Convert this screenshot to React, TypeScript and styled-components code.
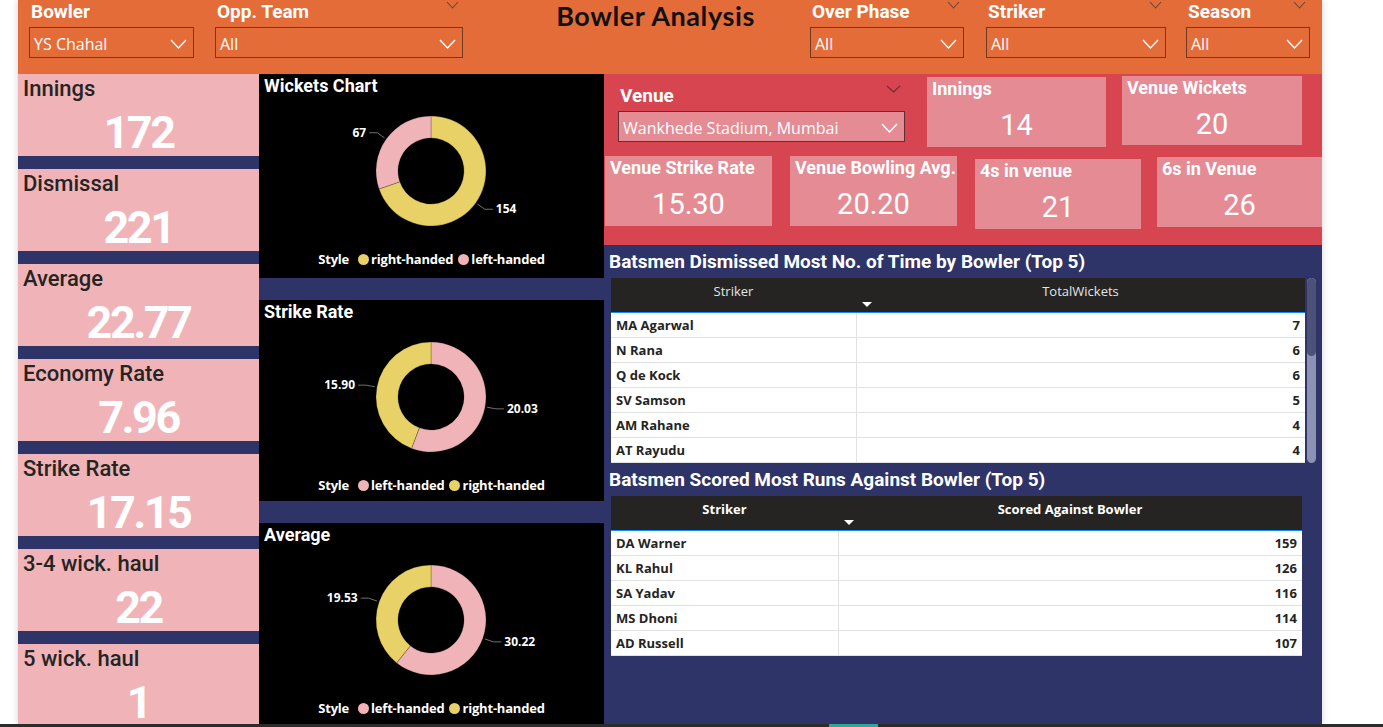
import React from 'react';
import styled, { createGlobalStyle } from 'styled-components';

const GlobalStyle = createGlobalStyle`
  html, body { margin: 0; padding: 0; background: #fff; }
  body { font-family: 'Open Sans', 'Liberation Sans', sans-serif; overflow: hidden; }
  * { box-sizing: border-box; }
`;

const NAVY = '#2E3467';
const PINK = '#F0B4B8';
const YELLOW = '#E8D166';

type Seg = { value: number; color: string; text: string };
type LegendItem = { label: string; color: string };

const polar = (cx: number, cy: number, r: number, deg: number) => {
	const a = (deg * Math.PI) / 180;
	return [cx + r * Math.sin(a), cy - r * Math.cos(a)];
};

const arc = (cx: number, cy: number, r0: number, r1: number, a0: number, a1: number) => {
	const large = a1 - a0 > 180 ? 1 : 0;
	const [x0, y0] = polar(cx, cy, r1, a0);
	const [x1, y1] = polar(cx, cy, r1, a1);
	const [x2, y2] = polar(cx, cy, r0, a1);
	const [x3, y3] = polar(cx, cy, r0, a0);
	return `M${x0} ${y0} A${r1} ${r1} 0 ${large} 1 ${x1} ${y1} L${x2} ${y2} A${r0} ${r0} 0 ${large} 0 ${x3} ${y3} Z`;
};

const Chevron = ({ w, h, color, sw }: { w: number; h: number; color: string; sw: number }) => (
	<svg width={w} height={h} viewBox={`0 0 ${w} ${h}`}>
		<polyline points={`1,1 ${w / 2},${h - 1} ${w - 1},1`} fill="none" stroke={color} strokeWidth={sw} />
	</svg>
);

const Donut = ({ segs }: { segs: Seg[] }) => {
	const cx = 172;
	const cy = 75;
	const rOut = 55;
	const rIn = 33;
	const total = segs.reduce((s, x) => s + x.value, 0);
	let start = 0;
	return (
		<DonutSvg width={345} height={146}>
			{segs.map(s => {
				const sweep = (s.value / total) * 360;
				const a0 = start;
				const a1 = start + sweep;
				start = a1;
				const mid = (a0 + a1) / 2;
				const [px, py] = polar(cx, cy, rOut + 2, mid);
				const [ex, ey] = polar(cx, cy, rOut + 11, mid);
				const dir = Math.sin((mid * Math.PI) / 180) >= 0 ? 1 : -1;
				const hx = ex + dir * 8;
				return (
					<g key={s.text}>
						<path d={arc(cx, cy, rIn, rOut, a0, a1)} fill={s.color} stroke='rgba(0,0,0,.35)' strokeWidth={0.6} />
						<polyline points={`${px},${py} ${ex},${ey} ${hx},${ey}`} fill='none' stroke='#6f6f6f' strokeWidth={1} />
						<ChartLabel x={hx + dir * 3} y={ey + 4} textAnchor={dir > 0 ? 'start' : 'end'}>
							{s.text}
						</ChartLabel>
					</g>
				);
			})}
		</DonutSvg>
	);
};

const Chart = ({ title, segs, legend, h }: { title: string; segs: Seg[]; legend: LegendItem[]; h?: number }) => (
	<ChartPanel $h={h}>
		<ChartTitle>{title}</ChartTitle>
		<Donut segs={segs} />
		<Legend>
			<LegendHead>Style</LegendHead>
			{legend.map(l => (
				<LegendEntry key={l.label}>
					<LegendDot $color={l.color} />
					{l.label}
				</LegendEntry>
			))}
		</Legend>
	</ChartPanel>
);

const HeaderSlicer = ({ label, value, w, ml, chevron }: { label: string; value: string; w: number; ml?: number; chevron?: boolean }) => (
	<Slicer $w={w} $ml={ml}>
		<SlicerHead>
			<SlicerLabel>{label}</SlicerLabel>
			{chevron && <Chevron w={13} h={8} color='rgba(70,55,50,.75)' sw={1.1} />}
		</SlicerHead>
		<DropBox>
			<span>{value}</span>
			<Chevron w={17} h={10} color='#fff' sw={1.4} />
		</DropBox>
	</Slicer>
);

const kpis = [
	{ label: 'Innings', value: '172' },
	{ label: 'Dismissal', value: '221' },
	{ label: 'Average', value: '22.77' },
	{ label: 'Economy Rate', value: '7.96' },
	{ label: 'Strike Rate', value: '17.15' },
	{ label: '3-4 wick. haul', value: '22' },
	{ label: '5 wick. haul', value: '1' },
];

const dismissed = [
	['MA Agarwal', '7'],
	['N Rana', '6'],
	['Q de Kock', '6'],
	['SV Samson', '5'],
	['AM Rahane', '4'],
	['AT Rayudu', '4'],
];

const scored = [
	['DA Warner', '159'],
	['KL Rahul', '126'],
	['SA Yadav', '116'],
	['MS Dhoni', '114'],
	['AD Russell', '107'],
];

const App = () => {
	return (
		<Page>
			<GlobalStyle />
			<Screen>
				<Report>
					<Header>
						<HeaderSlicer label='Bowler' value='YS Chahal' w={165} />
						<HeaderSlicer label='Opp. Team' value='All' w={248} ml={21} chevron />
						<TitleBox>
							<Title>Bowler Analysis</Title>
						</TitleBox>
						<HeaderSlicer label='Over Phase' value='All' w={154} chevron />
						<HeaderSlicer label='Striker' value='All' w={180} ml={22} chevron />
						<HeaderSlicer label='Season' value='All' w={124} ml={20} chevron />
					</Header>
					<Body>
						<KpiColumn>
							{kpis.map((k, i) => (
								<KpiCard key={k.label} $grow={i === kpis.length - 1}>
									<KpiLabel>{k.label}</KpiLabel>
									<KpiValue>{k.value}</KpiValue>
								</KpiCard>
							))}
						</KpiColumn>
						<ChartColumn>
							<Chart
								title='Wickets Chart'
								h={204}
								segs={[
									{ value: 154, color: YELLOW, text: '154' },
									{ value: 67, color: PINK, text: '67' },
								]}
								legend={[
									{ label: 'right-handed', color: YELLOW },
									{ label: 'left-handed', color: PINK },
								]}
							/>
							<Chart
								title='Strike Rate'
								h={201}
								segs={[
									{ value: 20.03, color: PINK, text: '20.03' },
									{ value: 15.9, color: YELLOW, text: '15.90' },
								]}
								legend={[
									{ label: 'left-handed', color: PINK },
									{ label: 'right-handed', color: YELLOW },
								]}
							/>
							<Chart
								title='Average'
								segs={[
									{ value: 30.22, color: PINK, text: '30.22' },
									{ value: 19.53, color: YELLOW, text: '19.53' },
								]}
								legend={[
									{ label: 'left-handed', color: PINK },
									{ label: 'right-handed', color: YELLOW },
								]}
							/>
						</ChartColumn>
						<RightColumn>
							<VenuePanel>
								<VenueRow $h={80} $pl={14}>
									<Slicer $w={287} $mt={8}>
										<SlicerHead>
											<SlicerLabel>Venue</SlicerLabel>
											<Chevron w={15} h={8} color='rgba(70,40,45,.75)' sw={1.1} />
										</SlicerHead>
										<DropBox $fill='#E48B94' $edge='#5E3036'>
											<span>Wankhede Stadium, Mumbai</span>
											<Chevron w={17} h={10} color='#fff' sw={1.4} />
										</DropBox>
									</Slicer>
									<VenueCard $w={179} $h={70} $ml={22} $mt={1}>
										<VenueLabel>Innings</VenueLabel>
										<VenueValue>14</VenueValue>
									</VenueCard>
									<VenueCard $w={180} $h={69} $ml={16}>
										<VenueLabel>Venue Wickets</VenueLabel>
										<VenueValue>20</VenueValue>
									</VenueCard>
								</VenueRow>
								<VenueRow $pl={1}>
									<VenueCard $w={167} $h={70}>
										<VenueLabel>Venue Strike Rate</VenueLabel>
										<VenueValue>15.30</VenueValue>
									</VenueCard>
									<VenueCard $w={167} $h={70} $ml={18}>
										<VenueLabel>Venue Bowling Avg.</VenueLabel>
										<VenueValue>20.20</VenueValue>
									</VenueCard>
									<VenueCard $w={166} $h={70} $ml={18} $mt={3}>
										<VenueLabel>4s in venue</VenueLabel>
										<VenueValue>21</VenueValue>
									</VenueCard>
									<VenueCard $w={165} $h={70} $ml={16} $mt={1}>
										<VenueLabel>6s in Venue</VenueLabel>
										<VenueValue>26</VenueValue>
									</VenueCard>
								</VenueRow>
							</VenuePanel>
							<TablesArea>
								<TableTitle>Batsmen Dismissed Most No. of Time by Bowler (Top 5)</TableTitle>
								<TableWrap>
									<Grid $w={694}>
										<colgroup>
											<col style={{ width: 245 }} />
											<col />
										</colgroup>
										<thead>
											<tr>
												<HeadCell>Striker</HeadCell>
												<HeadCell>
													TotalWickets
													<SortArrow />
												</HeadCell>
											</tr>
										</thead>
										<tbody>
											{dismissed.map(([n, v]) => (
												<tr key={n}>
													<NameCell>{n}</NameCell>
													<NumCell>{v}</NumCell>
												</tr>
											))}
										</tbody>
									</Grid>
									<ScrollTrack>
										<ScrollThumb />
									</ScrollTrack>
								</TableWrap>
								<TableTitle $mt={6}>Batsmen Scored Most Runs Against Bowler (Top 5)</TableTitle>
								<TableWrap>
									<Grid $w={691}>
										<colgroup>
											<col style={{ width: 227 }} />
											<col />
										</colgroup>
										<thead>
											<tr>
												<HeadCell $bold>Striker</HeadCell>
												<HeadCell $bold>
													Scored Against Bowler
													<SortArrow />
												</HeadCell>
											</tr>
										</thead>
										<tbody>
											{scored.map(([n, v]) => (
												<tr key={n}>
													<NameCell>{n}</NameCell>
													<NumCell>{v}</NumCell>
												</tr>
											))}
										</tbody>
									</Grid>
								</TableWrap>
							</TablesArea>
						</RightColumn>
					</Body>
				</Report>
			</Screen>
			<TaskStrip>
				<TaskMark />
			</TaskStrip>
		</Page>
	);
};

export default App;

const Page = styled.div`
	width: 1383px;
	height: 727px;
	display: flex;
	flex-direction: column;
	background: #fff;
	overflow: hidden;
`;

const Screen = styled.div`
	flex: 1;
	display: flex;
	padding-left: 18px;
	min-height: 0;
`;

const Report = styled.div`
	width: 1304px;
	display: flex;
	flex-direction: column;
	box-shadow: 0 0 7px rgba(0, 0, 0, 0.18);
	overflow: hidden;
`;

const TaskStrip = styled.div`
	height: 3px;
	flex: none;
	background: #2b2b2b;
	display: flex;
	padding-left: 829px;
`;

const TaskMark = styled.div`
	width: 49px;
	background: #2fa89a;
`;

const Header = styled.header`
	height: 74px;
	flex: none;
	background: #e46c39;
	display: flex;
	align-items: flex-start;
	padding-left: 11px;
`;

const Slicer = styled.div<{ $w: number; $ml?: number; $mt?: number }>`
	flex: none;
	width: ${p => p.$w}px;
	margin-left: ${p => p.$ml ?? 0}px;
	margin-top: ${p => p.$mt ?? 0}px;
`;

const SlicerHead = styled.div`
	height: 27px;
	display: flex;
	justify-content: space-between;
	align-items: flex-start;
	padding: 0 4px 0 2px;
	svg {
		margin-top: 1px;
	}
`;

const SlicerLabel = styled.span`
	font-family: Roboto, 'Liberation Sans', sans-serif;
	font-weight: 700;
	font-size: 19px;
	line-height: 23px;
	color: #fff;
`;

const DropBox = styled.div<{ $fill?: string; $edge?: string }>`
	height: 31px;
	border: 1.5px solid ${p => p.$edge ?? '#6e3a22'};
	background: ${p => p.$fill ?? 'transparent'};
	display: flex;
	align-items: center;
	justify-content: space-between;
	padding: 2px 6px 0 4px;
	font-family: 'Open Sans', 'Liberation Sans', sans-serif;
	font-size: 16px;
	color: #fff;
	white-space: nowrap;
`;

const TitleBox = styled.div`
	flex: none;
	width: 347px;
	padding-left: 38px;
	text-align: center;
`;

const Title = styled.h1`
	margin: 0;
	font-family: Lato, 'Liberation Sans', sans-serif;
	font-weight: 700;
	font-size: 27px;
	line-height: 32px;
	letter-spacing: 0.6px;
	color: #111;
`;

const Body = styled.div`
	flex: 1;
	display: flex;
	min-height: 0;
`;

const KpiColumn = styled.div`
	width: 241px;
	flex: none;
	display: flex;
	flex-direction: column;
	gap: 13px;
	background: ${NAVY};
`;

const KpiCard = styled.div<{ $grow?: boolean }>`
	height: 82px;
	flex: ${p => (p.$grow ? '1 1 0' : 'none')};
	min-height: 0;
	background: ${PINK};
	padding-top: 3px;
	display: flex;
	flex-direction: column;
`;

const KpiLabel = styled.div`
	padding-left: 5px;
	font-family: Roboto, 'Liberation Sans', sans-serif;
	font-weight: 500;
	font-size: 22px;
	line-height: 24px;
	color: #252423;
`;

const KpiValue = styled.div`
	margin-top: 9px;
	text-align: center;
	font-family: Roboto, 'Liberation Sans', sans-serif;
	font-weight: 700;
	font-size: 45px;
	line-height: 45px;
	letter-spacing: -2.5px;
	color: #fff;
`;

const ChartColumn = styled.div`
	width: 345px;
	flex: none;
	display: flex;
	flex-direction: column;
	gap: 22px;
	background: ${NAVY};
`;

const ChartPanel = styled.section<{ $h?: number }>`
	background: #000;
	height: ${p => (p.$h ? `${p.$h}px` : 'auto')};
	flex: ${p => (p.$h ? 'none' : '1 1 0')};
	min-height: 0;
	display: flex;
	flex-direction: column;
	overflow: hidden;
`;

const ChartTitle = styled.h2`
	margin: 0;
	height: 22px;
	padding: 2px 0 0 5px;
	font-family: Roboto, 'Liberation Sans', sans-serif;
	font-weight: 700;
	font-size: 18px;
	line-height: 20px;
	color: #fff;
`;

const DonutSvg = styled.svg`
	display: block;
	flex: none;
`;

const ChartLabel = styled.text`
	font-family: 'Open Sans', 'Liberation Sans', sans-serif;
	font-weight: 700;
	font-size: 12px;
	fill: #fff;
`;

const Legend = styled.div`
	margin-top: 8px;
	height: 18px;
	display: flex;
	justify-content: center;
	align-items: center;
	gap: 5px;
	font-family: 'Open Sans', 'Liberation Sans', sans-serif;
	font-weight: 700;
	font-size: 13px;
	letter-spacing: -0.2px;
	color: #fff;
`;

const LegendHead = styled.span`
	margin-right: 4px;
`;

const LegendEntry = styled.span`
	display: flex;
	align-items: center;
	gap: 2px;
`;

const LegendDot = styled.span<{ $color: string }>`
	width: 11px;
	height: 11px;
	border-radius: 50%;
	background: ${p => p.$color};
`;

const RightColumn = styled.div`
	width: 718px;
	flex: none;
	display: flex;
	flex-direction: column;
`;

const VenuePanel = styled.div`
	height: 171px;
	flex: none;
	background: #d64550;
	padding-top: 2px;
`;

const VenueRow = styled.div<{ $h?: number; $pl?: number }>`
	display: flex;
	align-items: flex-start;
	height: ${p => (p.$h ? `${p.$h}px` : 'auto')};
	padding-left: ${p => p.$pl ?? 0}px;
`;

const VenueCard = styled.div<{ $w: number; $h: number; $ml?: number; $mt?: number }>`
	flex: none;
	width: ${p => p.$w}px;
	height: ${p => p.$h}px;
	margin-left: ${p => p.$ml ?? 0}px;
	margin-top: ${p => p.$mt ?? 0}px;
	background: #e48b94;
	padding-top: 3px;
	display: flex;
	flex-direction: column;
`;

const VenueLabel = styled.div`
	padding-left: 5px;
	font-family: Roboto, 'Liberation Sans', sans-serif;
	font-weight: 700;
	font-size: 18px;
	line-height: 18px;
	color: #fff;
	white-space: nowrap;
`;

const VenueValue = styled.div`
	margin-top: 10px;
	text-align: center;
	font-family: Roboto, 'Liberation Sans', sans-serif;
	font-weight: 400;
	font-size: 29px;
	line-height: 34px;
	color: #fff;
`;

const TablesArea = styled.div`
	flex: 1;
	background: ${NAVY};
	padding: 6px 0 0 5px;
	display: flex;
	flex-direction: column;
`;

const TableTitle = styled.h3<{ $mt?: number }>`
	margin: ${p => p.$mt ?? 0}px 0 0;
	font-family: Roboto, 'Liberation Sans', sans-serif;
	font-weight: 700;
	font-size: 19px;
	line-height: 22px;
	color: #fff;
	white-space: nowrap;
`;

const TableWrap = styled.div`
	margin: 5px 0 0 2px;
	display: flex;
	align-items: flex-start;
	gap: 2px;
`;

const Grid = styled.table<{ $w: number }>`
	width: ${p => p.$w}px;
	border-collapse: collapse;
	table-layout: fixed;
	font-family: 'Open Sans', 'Liberation Sans', sans-serif;
	font-size: 13px;
`;

const HeadCell = styled.th<{ $bold?: boolean }>`
	position: relative;
	height: 34px;
	padding: 4px 0 0;
	vertical-align: top;
	text-align: center;
	background: #252423;
	border-bottom: 1px solid #118dff;
	color: ${p => (p.$bold ? '#fff' : '#e4e4e4')};
	font-weight: ${p => (p.$bold ? 700 : 400)};
	line-height: 18px;
`;

const SortArrow = styled.span`
	position: absolute;
	left: 6px;
	bottom: 5px;
	width: 0;
	height: 0;
	border-left: 5px solid transparent;
	border-right: 5px solid transparent;
	border-top: 5px solid #fff;
`;

const NameCell = styled.td`
	height: 25px;
	padding: 0 5px;
	background: #fff;
	border-bottom: 1px solid #e2e2e2;
	border-right: 1px solid #e2e2e2;
	color: #252423;
	font-weight: 700;
	white-space: nowrap;
`;

const NumCell = styled(NameCell)`
	text-align: right;
	border-right: none;
`;

const ScrollTrack = styled.div`
	width: 9px;
	height: 185px;
	border-radius: 5px;
	background: #8d91b4;
	overflow: hidden;
`;

const ScrollThumb = styled.div`
	height: 78px;
	border-radius: 5px;
	background: #4d5177;
`;
